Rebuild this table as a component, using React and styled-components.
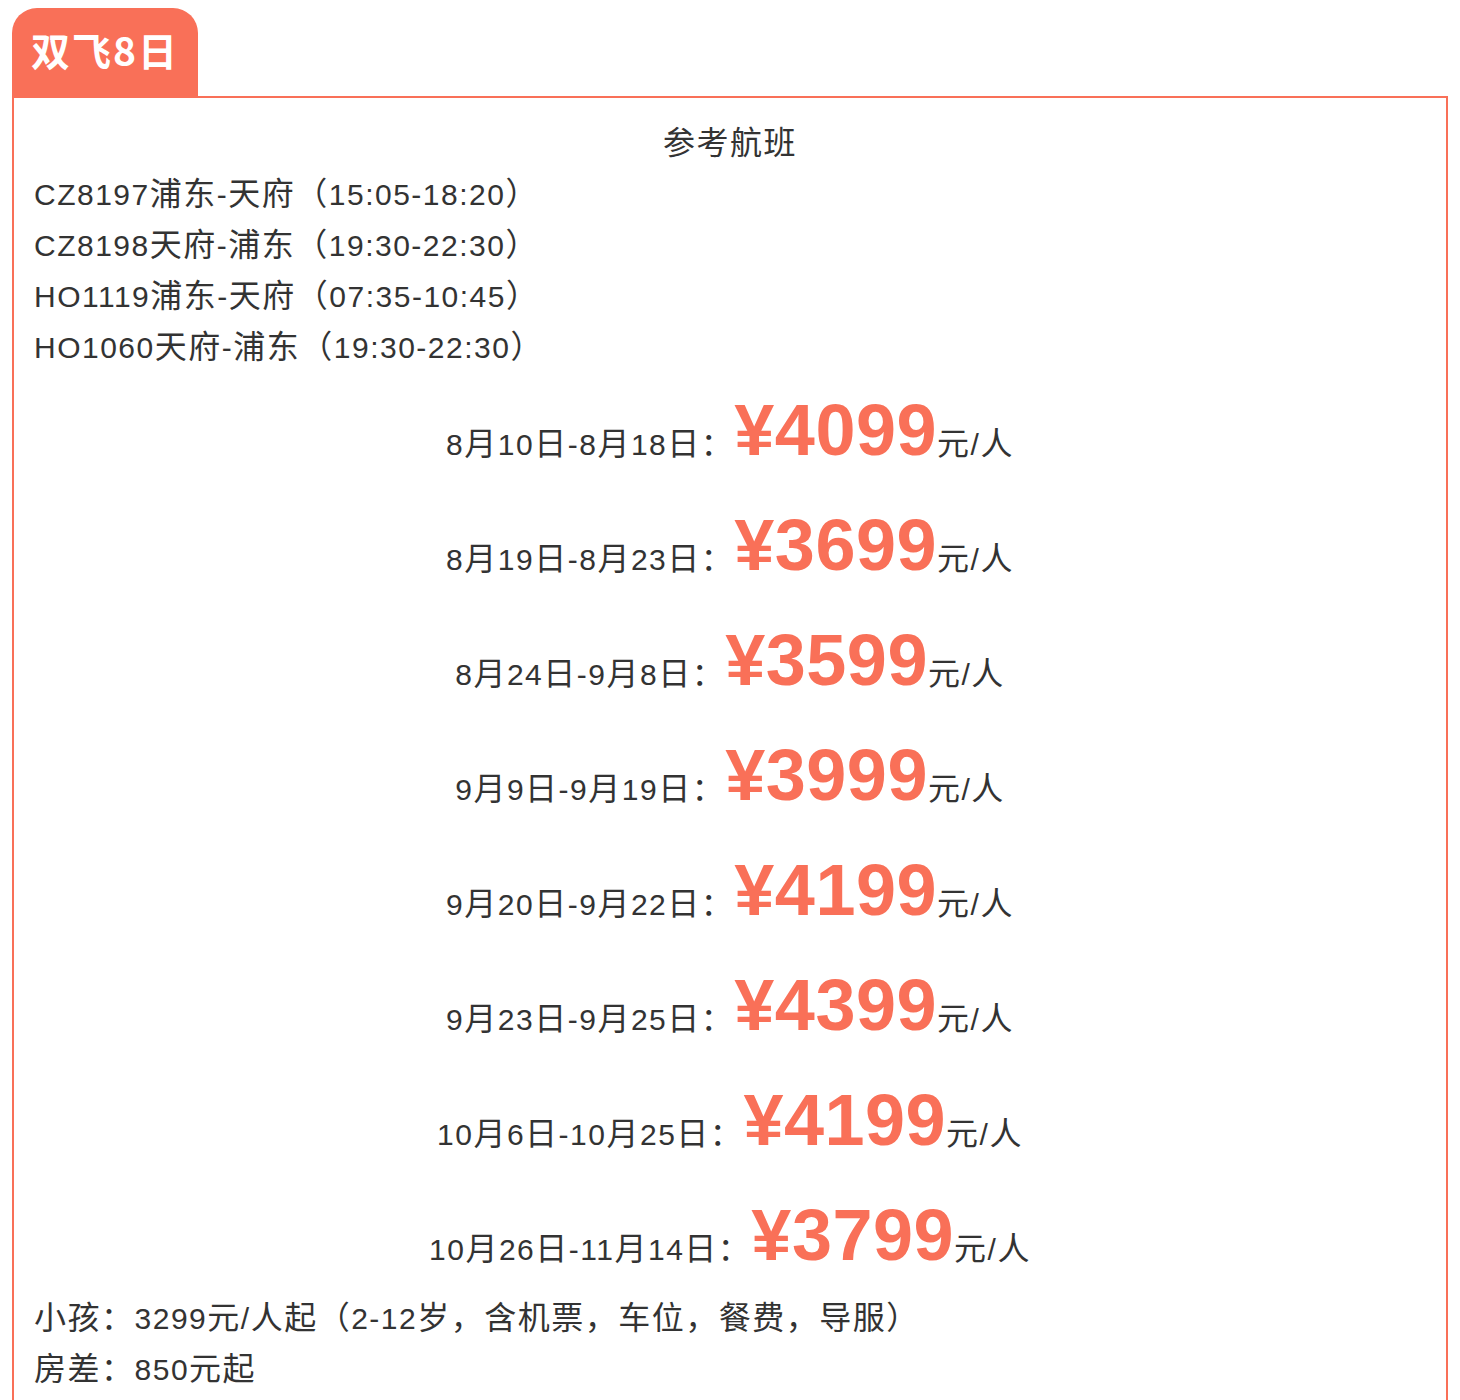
import styled, { createGlobalStyle } from "styled-components";

const GlobalStyle = createGlobalStyle`
  body {
    margin: 8px;
    background: #fff;
    font-family: "Liberation Sans", Arial, "Noto Sans CJK SC", sans-serif;
    color: #333;
  }
`;

const accent = "#f97058";

const Wrapper = styled.div`
  padding: 0 4px;
`;

const Tab = styled.div`
  display: inline-flex;
  align-items: center;
  height: 88px;
  padding: 0 19px 6px 19px;
  background: ${accent};
  border-radius: 25px 25px 0 0;
  color: #fff;
  font-family: "Noto Sans CJK SC", sans-serif;
  font-weight: 700;
  font-size: 39px;
  letter-spacing: 2px;
  box-sizing: border-box;
`;

const Box = styled.div`
  border: 2px solid ${accent};
  padding: 20px;
  font-size: 30px;
  letter-spacing: 1.5px;
`;

const Line = styled.p`
  margin: 0;
  height: 51px;
  line-height: 51px;
  text-align: ${(props) => (props.$center ? "center" : "left")};
`;

// CJK glyphs in the reference run a little wider than the Latin ones
const Cjk = styled.span`
  font-family: "Noto Sans CJK SC", sans-serif;
  font-size: 32px;
  line-height: 1;
  letter-spacing: 1.5px;
`;

const PriceRow = styled.p`
  margin: 0;
  font-size: 30px;
  line-height: 1.6;
  text-align: center;
  height: 115px;
`;

const Price = styled.span`
  font-size: 72px;
  font-weight: 700;
  letter-spacing: 0.5px;
  color: ${accent};
`;

const cjkRun = /([\u3000-\u303f\u3400-\u9fff\uff00-\uff0f\uff1a-\uff20]+)/;

const mix = (text) =>
  text.split(cjkRun).map((part, i) =>
    i % 2 === 1 ? <Cjk key={i}>{part}</Cjk> : part
  );

const flights = [
  "CZ8197浦东-天府（15:05-18:20）",
  "CZ8198天府-浦东（19:30-22:30）",
  "HO1119浦东-天府（07:35-10:45）",
  "HO1060天府-浦东（19:30-22:30）",
];

const prices = [
  ["8月10日-8月18日：", "4099"],
  ["8月19日-8月23日：", "3699"],
  ["8月24日-9月8日：", "3599"],
  ["9月9日-9月19日：", "3999"],
  ["9月20日-9月22日：", "4199"],
  ["9月23日-9月25日：", "4399"],
  ["10月6日-10月25日：", "4199"],
  ["10月26日-11月14日：", "3799"],
];

export default function App() {
  return (
    <Wrapper>
      <GlobalStyle />
      <Tab>双飞8日</Tab>
      <Box>
        <Line $center>{mix("参考航班")}</Line>
        {flights.map((f) => (
          <Line key={f}>{mix(f)}</Line>
        ))}
        {prices.map(([label, amount]) => (
          <PriceRow key={label}>
            {mix(label)}
            <Price>¥{amount}</Price>
            {mix("元/人")}
          </PriceRow>
        ))}
        <Line>{mix("小孩：3299元/人起（2-12岁，含机票，车位，餐费，导服）")}</Line>
        <Line>{mix("房差：850元起")}</Line>
      </Box>
    </Wrapper>
  );
}
